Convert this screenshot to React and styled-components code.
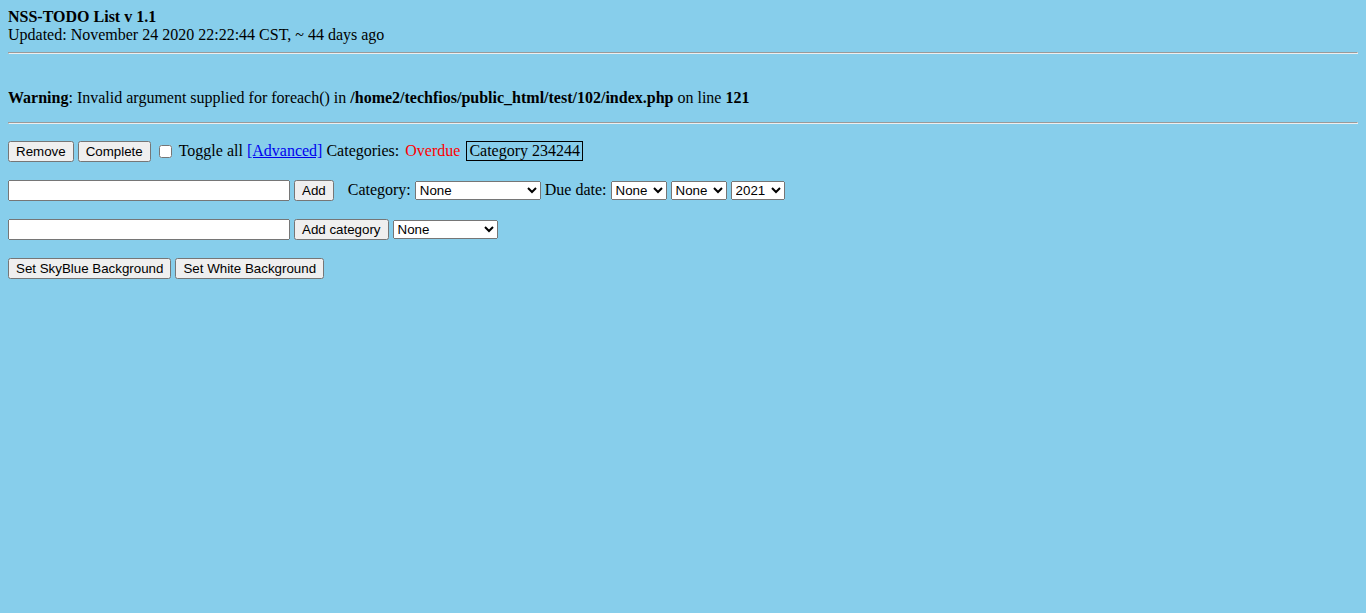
import React from "react";
import styled, { createGlobalStyle } from "styled-components";

const Global = createGlobalStyle`
  html, body { background: #87ceeb; }
  body {
    margin: 8px;
    font-family: "Liberation Serif", "Times New Roman", serif;
    font-size: 16px;
    line-height: 18px;
    color: #000;
  }
`;

const Header = styled.div`
  display: flex;
  flex-direction: column;
`;

const Title = styled.b`
  font-weight: bold;
`;

const Rule = styled.hr`
  margin: 8px 0;
`;

const WarningBlock = styled.div`
  padding: 27px 0 7px;
`;

const Row = styled.div`
  display: flex;
  align-items: baseline;
  gap: 4px;
  margin-top: ${(p) => p.$top}px;
  white-space: nowrap;
`;

const Button = styled.button`
  font-family: "Liberation Sans", Arial, sans-serif;
  font-size: 13.3333px;
  margin: 0;
`;

const TextInput = styled.input`
  font-family: "Liberation Sans", Arial, sans-serif;
  font-size: 13.3333px;
  width: 282px;
  box-sizing: border-box;
  margin: 0;
`;

const Select = styled.select`
  font-family: "Liberation Sans", Arial, sans-serif;
  font-size: 13.3333px;
  width: ${(p) => p.$w}px;
  margin: 0;
`;

const Check = styled.input`
  margin: 3px 3px 3px 4px;
  align-self: center;
`;

const Link = styled.a`
  color: #0000ee;
  text-decoration: underline;
  cursor: pointer;
`;

const Cat = styled.span`
  margin-left: ${(p) => p.$ml || 0}px;
  color: ${(p) => p.$color || "#000"};
  border: ${(p) => (p.$boxed ? "1px solid #000" : "none")};
  padding: ${(p) => (p.$boxed ? "0 2px" : "0")};
`;

const Label = styled.span`
  margin-left: ${(p) => p.$ml || 0}px;
`;

export default function App() {
  return (
    <>
      <Global />
      <Header>
        <Title>NSS-TODO List v 1.1</Title>
        <span>Updated: November 24 2020 22:22:44 CST, ~ 44 days ago</span>
      </Header>
      <Rule />
      <WarningBlock>
        <b>Warning</b>: Invalid argument supplied for foreach() in{" "}
        <b>/home2/techfios/public_html/test/102/index.php</b> on line <b>121</b>
      </WarningBlock>
      <Rule />
      <Row $top={17}>
        <Button>Remove</Button>
        <Button>Complete</Button>
        <Check type="checkbox" />
        <span>Toggle all</span>
        <Link>[Advanced]</Link>
        <span>Categories:</span>
        <Cat $ml={2} $color="#ff0000">Overdue</Cat>
        <Cat $ml={2} $boxed>Category 234244</Cat>
      </Row>
      <Row $top={18}>
        <TextInput type="text" />
        <Button>Add</Button>
        <Label $ml={10}>Category:</Label>
        <Select $w={126} defaultValue="None">
          <option>None</option>
        </Select>
        <span>Due date:</span>
        <Select $w={56} defaultValue="None">
          <option>None</option>
        </Select>
        <Select $w={56} defaultValue="None">
          <option>None</option>
        </Select>
        <Select $w={54} defaultValue="2021">
          <option>2021</option>
        </Select>
      </Row>
      <Row $top={18}>
        <TextInput type="text" />
        <Button>Add category</Button>
        <Select $w={105} defaultValue="None">
          <option>None</option>
        </Select>
      </Row>
      <Row $top={18}>
        <Button>Set SkyBlue Background</Button>
        <Button>Set White Background</Button>
      </Row>
    </>
  );
}
